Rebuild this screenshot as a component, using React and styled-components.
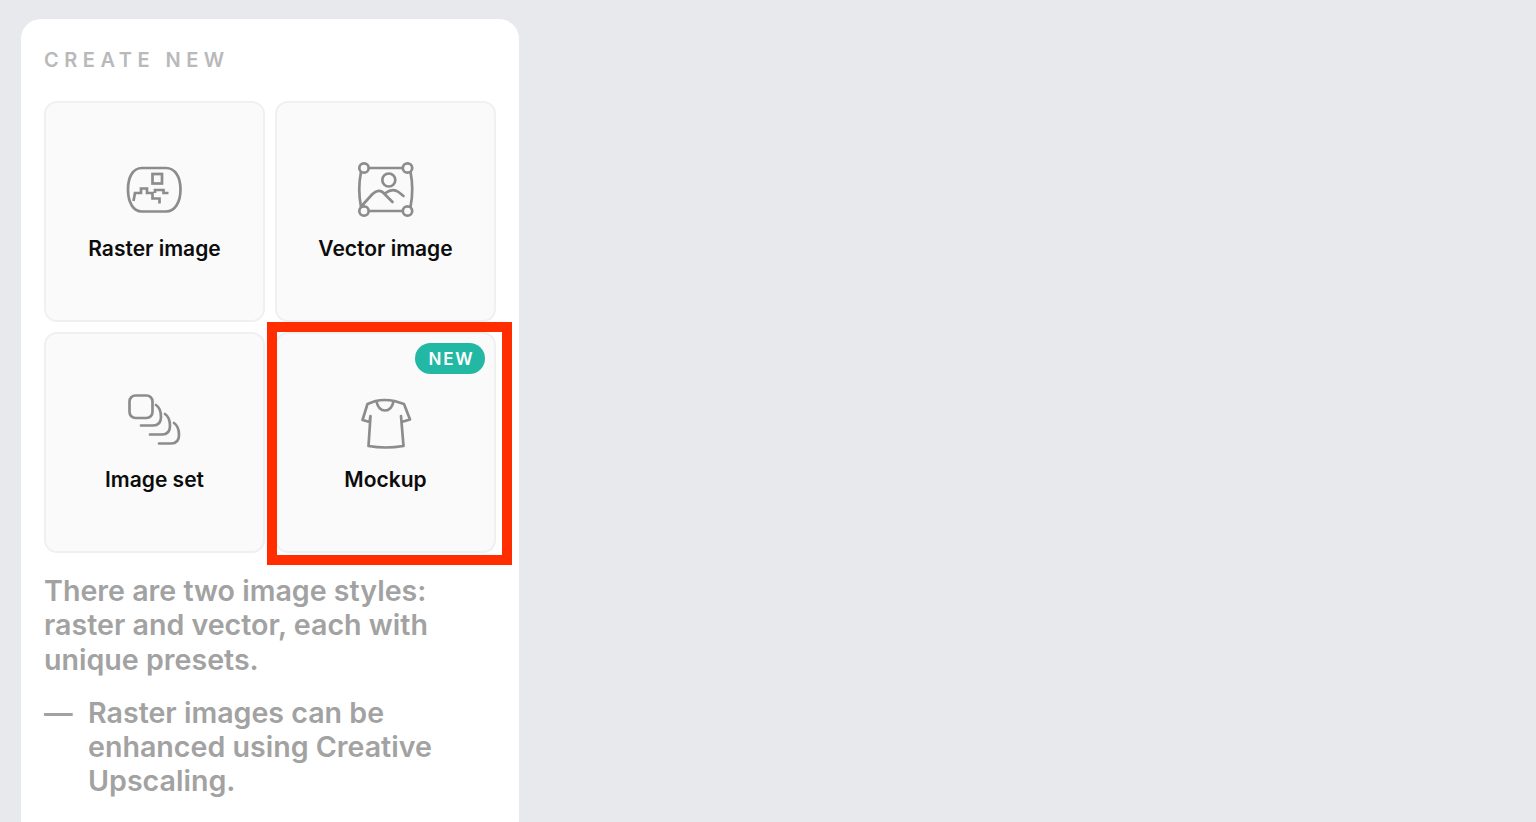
import React from "react";
import styled, { createGlobalStyle } from "styled-components";

const Global = createGlobalStyle`
  html, body { margin: 0; padding: 0; height: 100%; overflow: hidden; background: #e8e9ed; }
  body { font-family: Inter, "Liberation Sans", sans-serif; }
`;
const Page = styled.div`
  height: 822px;
  padding: 19px 0 0 21px;
  box-sizing: border-box;
  overflow: hidden;
`;
const Panel = styled.section`
  width: 498px;
  box-sizing: border-box;
  background: #fff;
  border-radius: 20px;
  padding: 29px 23px 40px;
`;
const Heading = styled.h2`
  margin: 0 0 29px;
  font-size: 20px;
  line-height: 24px;
  font-weight: 600;
  letter-spacing: 5.5px;
  color: #b9b9b9;
  text-transform: uppercase;
`;
const Grid = styled.div`
  display: grid;
  grid-template-columns: 221px 221px;
  grid-auto-rows: 221px;
  gap: 10px;
`;
const Tile = styled.button`
  position: relative;
  box-sizing: border-box;
  display: flex;
  flex-direction: column;
  align-items: center;
  padding: 57px 0 0;
  gap: 16px;
  background: #fafafa;
  border: 2px solid #f0f0f0;
  border-radius: 13px;
  font: inherit;
`;
const IconSvg = styled.svg`
  width: 60px;
  height: 60px;
  flex: none;
  display: block;
  fill: none;
  stroke: #8c8c8c;
  stroke-width: 2.7;
  stroke-linecap: round;
  stroke-linejoin: round;
`;
const TileLabel = styled.span`
  font-size: 21px;
  line-height: 26px;
  font-weight: 600;
  color: #0c0c0c;
`;
const Badge = styled.span`
  position: absolute;
  top: 9px;
  right: 9px;
  box-sizing: border-box;
  width: 70px;
  height: 31px;
  padding-left: 3px;
  border-radius: 16px;
  display: flex;
  align-items: center;
  justify-content: center;
  background: #22b8a4;
  color: #fff;
  font-size: 17px;
  font-weight: 600;
  letter-spacing: 0.11em;
`;
const Highlight = styled.div`
  position: absolute;
  top: -12px;
  left: -10px;
  right: -18px;
  bottom: -14px;
  border: 10px solid #ff2d00;
  pointer-events: none;
`;
const Description = styled.p`
  margin: 21px 0 0;
  font-size: 28.6px;
  line-height: 34.3px;
  font-weight: 600;
  color: #a2a2a2;
`;
const Bullet = styled.div`
  display: flex;
  gap: 14px;
  margin-top: 19px;
  font-size: 28.6px;
  line-height: 34.3px;
  font-weight: 600;
  color: #a2a2a2;
`;
const Dash = styled.span`
  flex: none;
  width: 30px;
`;

const RasterIcon = () => (
  <IconSvg viewBox="125 159 60 60">
    <path d="M142 167 H166 C175 167 180.500 176 180.500 188.500 C180.500 201 175 210.500 166 210.500 H142 C133 210.500 128 201 128 188.500 C128 176 133 167 142 167 Z" />
    <rect x="152.500" y="173" width="9.500" height="9.500" strokeLinejoin="miter" />
    <path strokeLinejoin="miter" strokeLinecap="butt" d="M133.500 200 L135 192 H141 V187.500 H147 V192 H152.500 V197.500 H159.500 V202.500 M155 192 V189 H163.500 V192 H168.500" />
  </IconSvg>
);
const VectorIcon = () => (
  <IconSvg viewBox="355.500 159 60 60">
    <circle cx="363.500" cy="167" r="4.700" />
    <circle cx="407" cy="167" r="4.700" />
    <circle cx="363.500" cy="210" r="4.700" />
    <circle cx="407" cy="210" r="4.700" />
    <path d="M368.500 167 H402 M368.500 210 H402 M360.500 171 Q357 188 360.500 206 M410 171 Q413.500 188 410 206" />
    <circle cx="388.300" cy="179" r="6.500" />
    <path d="M362 204 L372 193 Q377 188 382 191 L392 201 M385 192 Q392 187 398 191 L403 195" />
  </IconSvg>
);
const SetIcon = () => (
  <IconSvg viewBox="125 390 60 60">
    <rect x="129.500" y="394.500" width="23" height="22.500" rx="6" />
    <path d="M141 424.500 H153 C158.500 424.500 161 421 161 416 C161 410 159 406 156 404" />
    <path d="M150 433.500 H162 C167.500 433.500 170 430 170 425 C170 419 168 415 165 413" />
    <path d="M159 442.500 H171 C176.500 442.500 179 439 179 434 C179 428 177 424 174 422" />
  </IconSvg>
);
const ShirtIcon = () => (
  <IconSvg viewBox="355.500 390 60 60">
    <path d="M375 400 Q384 398 394 400 L403.500 403 L409.500 418.500 L401 421 L400.500 415 L403 445 Q385 448 368 445 L370 415 L369 421 L362 419 L367 403 Z" />
    <path d="M376 400.500 Q378 409.500 384.500 409.500 Q391 409.500 393 400.500" />
  </IconSvg>
);

export default function App() {
  return (
    <Page>
      <Global />
      <Panel>
        <Heading>Create new</Heading>
        <Grid>
          <Tile><RasterIcon /><TileLabel>Raster image</TileLabel></Tile>
          <Tile><VectorIcon /><TileLabel>Vector image</TileLabel></Tile>
          <Tile><SetIcon /><TileLabel>Image set</TileLabel></Tile>
          <Tile>
            <Badge>NEW</Badge>
            <ShirtIcon />
            <TileLabel>Mockup</TileLabel>
            <Highlight />
          </Tile>
        </Grid>
        <Description>There are two image styles: raster and vector, each with unique presets.</Description>
        <Bullet>
          <Dash>—</Dash>
          <span>Raster images can be enhanced using Creative Upscaling.</span>
        </Bullet>
      </Panel>
    </Page>
  );
}
